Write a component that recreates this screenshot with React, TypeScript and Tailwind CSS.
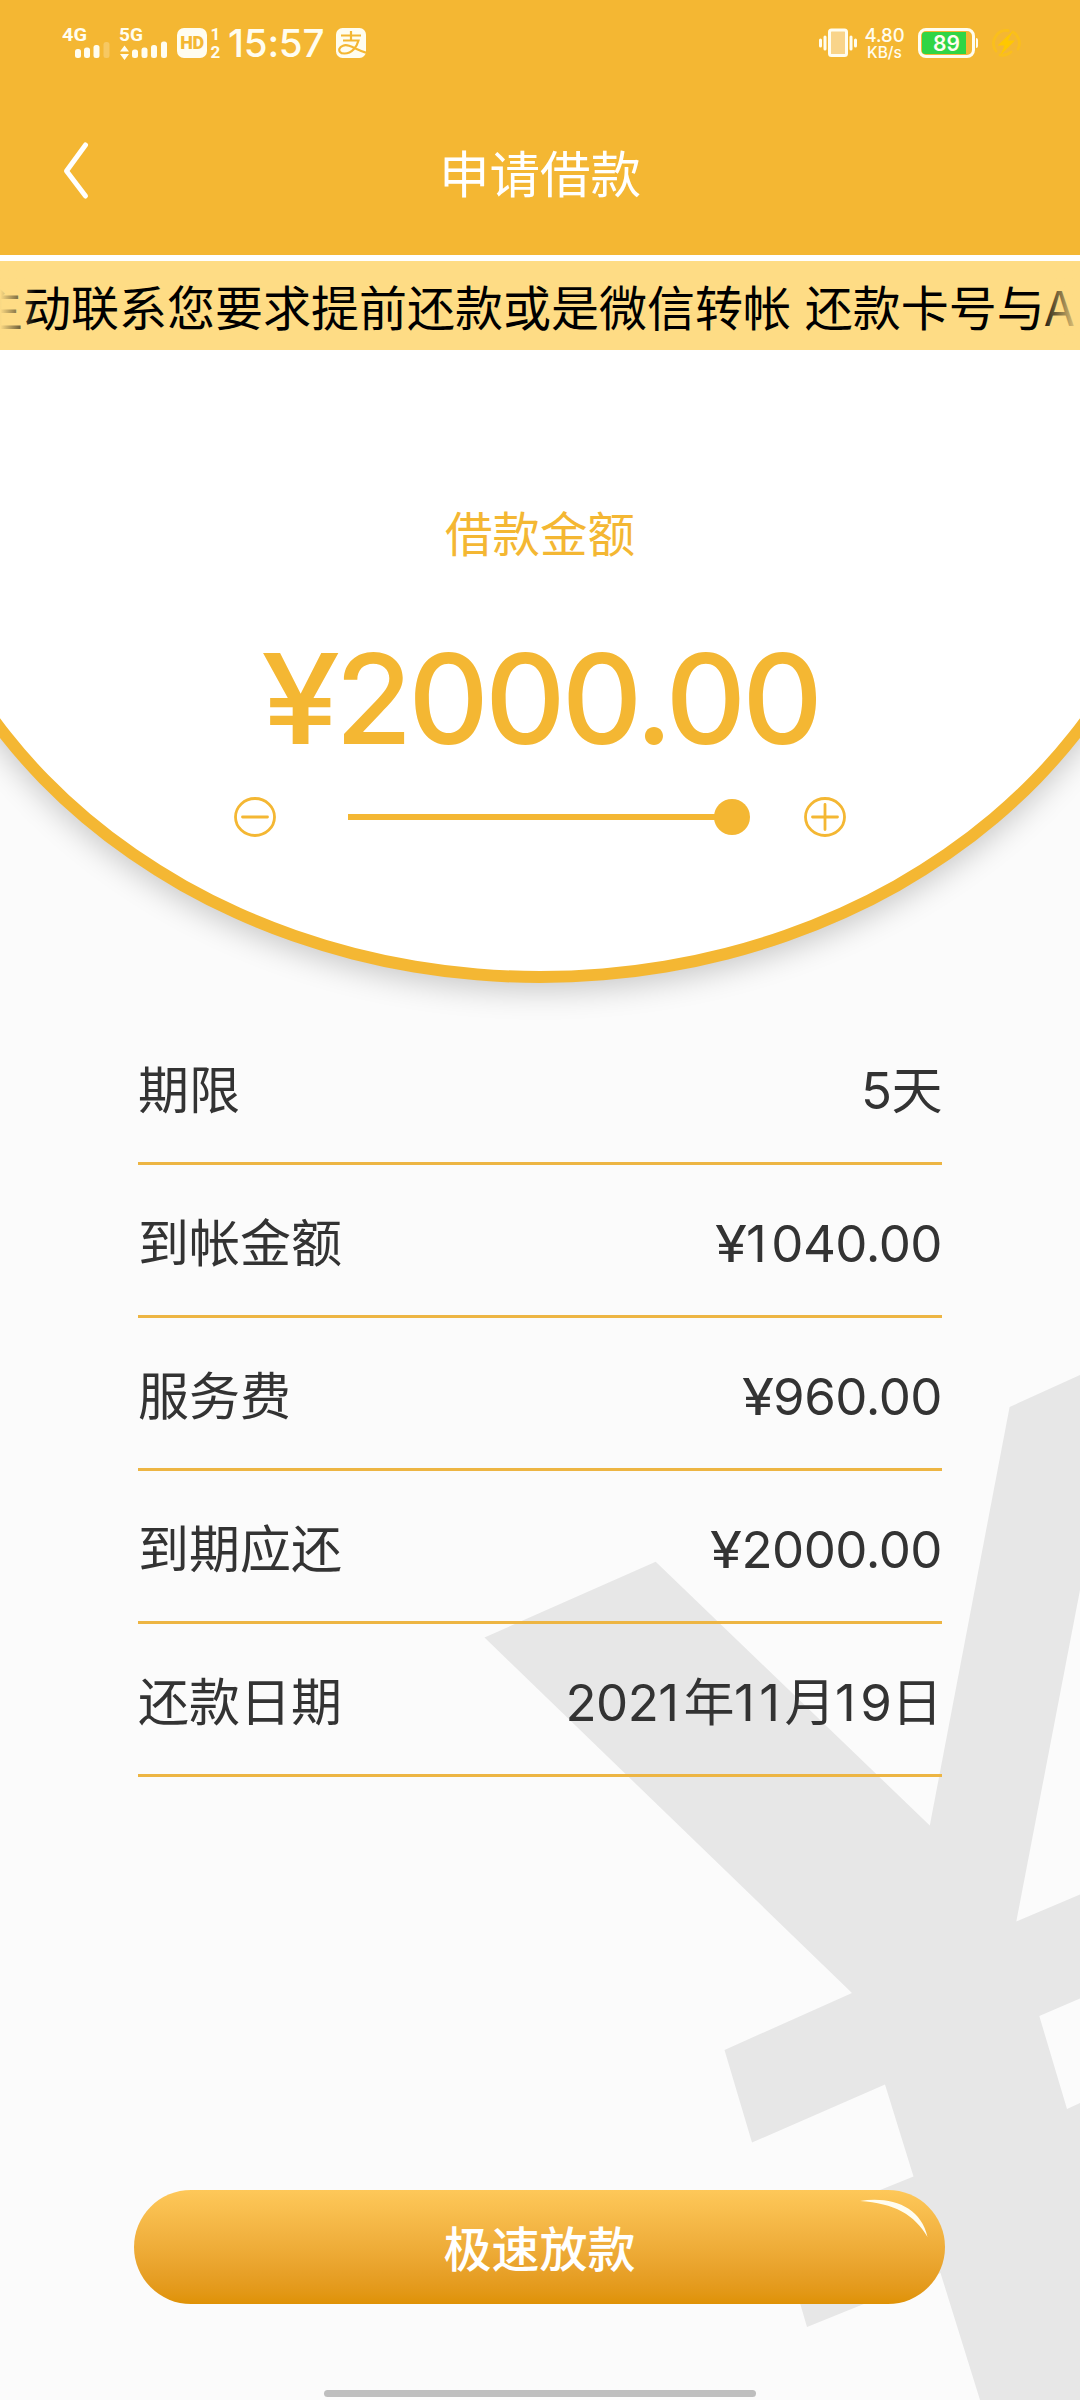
import React from 'react';

const GOLD = '#f4b733';

function Signal4G() {
  return (
    <svg className="h-[40px] w-[50px] shrink-0" viewBox="0 0 50 40" fill="#fffdf0">
      <text x="0" y="18" fontFamily="Roboto" fontWeight="700" fontSize="19" textLength="25" lengthAdjust="spacingAndGlyphs">4G</text>
      <rect x="13" y="26" width="6" height="9" rx="2.5" />
      <rect x="22" y="24.5" width="6" height="10.500" rx="2.5" />
      <rect x="31.500" y="22" width="6" height="13" rx="2.5" />
      <rect x="41.500" y="19" width="6" height="16" rx="2.5" opacity="0.25" />
    </svg>
  );
}

function Signal5G() {
  return (
    <svg className="ml-[7px] h-[40px] w-[50px] shrink-0" viewBox="0 0 50 40" fill="#fffdf0">
      <text x="0" y="18" fontFamily="Roboto" fontWeight="700" fontSize="19" textLength="24" lengthAdjust="spacingAndGlyphs">5G</text>
      <path d="M5.500 22.500l4.500 6H1z M5.500 37l4.500-6H1z" />
      <rect x="13" y="26.500" width="6" height="8.500" rx="2.5" />
      <rect x="22.500" y="24.500" width="6" height="10.500" rx="2.5" />
      <rect x="32" y="22" width="6" height="13" rx="2.5" />
      <rect x="42" y="18.500" width="6" height="16.500" rx="2.5" />
    </svg>
  );
}

function AlipayIcon() {
  return (
    <svg className="ml-[9px] h-[30px] w-[30px] shrink-0" viewBox="0 0 30 30" fill="none">
      <rect width="30" height="30" rx="6.500" fill="#fffdf0" />
      <path d="M5 7.500H25 M15 3V12.500 M7 12.500H22.500C21 18.500 16 25.500 8.500 25.500C3.500 25.500 2.800 22.500 3.500 20.700C4.500 18 8.500 16.300 13 17.800C18 19.400 23 22.500 30 24.700" stroke={GOLD} strokeWidth="2.200" />
    </svg>
  );
}

function StatusBar() {
  return (
    <div className="flex h-[86px] items-center pr-[59px] pl-[62px] font-[Roboto] text-[#fffdf0]">
      <Signal4G />
      <Signal5G />
      <div className="ml-[8px] flex h-[30px] w-[30px] items-center justify-center rounded-[7px] bg-[#fffdf0] text-[18px] leading-none font-black tracking-[-0.5px] text-[#f4b733]">HD</div>
      <div className="ml-[3px] flex w-[11px] flex-col gap-[1px] text-[17px] leading-[17px] font-bold">
        <span className="text-center">1</span>
        <span className="text-center">2</span>
      </div>
      <div className="ml-[7px] w-[99px] font-[Inter] text-[38.500px] leading-none font-medium tracking-[-0.2px]">15:57</div>
      <AlipayIcon />
      <svg className="ml-auto h-[30px] w-[38px]" viewBox="0 0 38 30" fill="none" stroke="#fffdf0" strokeWidth="3" strokeLinecap="round">
        <rect x="10.500" y="2" width="17" height="25.500" rx="2" fill="#f9d48a" />
        <path d="M6 9v12 M1.500 12v6 M32 9v12 M36.500 12v6" />
      </svg>
      <div className="ml-[8px] flex w-[39px] flex-col items-center font-[Inter]">
        <div className="text-[18.500px] leading-[18px] font-medium">4.80</div>
        <div className="text-[15.500px] leading-[17px] font-medium">KB/s</div>
      </div>
      <div className="ml-[14px] flex h-[30px] w-[57px] rounded-[8px] border-[3px] border-[#fffdf0] p-[1px]">
        <div className="flex w-[44px] items-center justify-end rounded-l-[3px] bg-[#30d545] pr-[6px] font-[Inter] text-[21px] leading-none font-semibold">89</div>
      </div>
      <div className="ml-[1px] h-[10px] w-[2px] rounded-r bg-[#fffdf0]" />
      <svg className="ml-[13px] h-[30px] w-[30px]" viewBox="0 0 30 30" fill="none">
        <path d="M17 2.500A13 13 0 0 0 5 23 M9 27A13 13 0 0 0 20 24 M22 4A13 13 0 0 1 27 21" stroke="#fabf1c" strokeWidth="2.800" strokeLinecap="round" />
        <path d="M22 3L6.500 17.500h7L9.500 27 24 12.500h-7z" fill="#ffc800" />
      </svg>
    </div>
  );
}

/* Widens the currency sign and evens out the space after the narrow "1". */
function Figures({ value }: { value: string }) {
  return (
    <>
      {value.split(/([¥1])/).map((part, i) => {
        if (part === '¥') {
          return (
            <span key={i} className="mr-[0.07em] inline-block origin-left scale-x-[1.14]">¥</span>
          );
        }
        return (
          <span key={i} className={part === '1' ? 'tracking-[4.500px]' : ''}>{part}</span>
        );
      })}
    </>
  );
}

const rows = [
  { label: '期限', value: '5天' },
  { label: '到帐金额', value: '¥1040.00' },
  { label: '服务费', value: '¥960.00' },
  { label: '到期应还', value: '¥2000.00' },
  { label: '还款日期', value: '2021年11月19日' },
];

function Watermark() {
  return (
    <svg className="absolute top-[1010px] left-[480px] h-[1040px] w-[600px]" viewBox="480 1360 600 1040">
      <path
        fill="#e7e7e7"
        d="M484.500 1637.500L655.700 1561.800L929.800 1825.500L1009.600 1407L1080 1375V1590L1016.300 1921.500L1080 1894.500V1998.500L1039.300 2016L1067 2109L1080 2103V2400H980L940.500 2273L807 2327L779 2231L913.500 2176.500L885 2084.500L752 2142.500L724.500 2050L852 1993Z"
      />
    </svg>
  );
}

export default function App() {
  return (
    <div className="flex h-[2400px] w-[1080px] flex-col overflow-hidden bg-white font-[Inter,'Noto_Sans_CJK_SC',sans-serif]">
      <header className="h-[255px] shrink-0 bg-[#f4b733]">
        <StatusBar />
        <div className="grid h-[169px] grid-cols-[1fr_auto_1fr] items-center">
          <svg className="ml-[60px] h-[60px] w-[32px]" viewBox="0 0 32 60" fill="none" stroke="#fff" strokeWidth="5" strokeLinecap="round" strokeLinejoin="round">
            <path d="M25.500 4L6.500 30L25.500 55" />
          </svg>
          <h1 className="font-['Noto_Sans_CJK_SC'] text-[50.500px] leading-[60px] text-white">申请借款</h1>
        </div>
      </header>

      <div className="relative mt-[6px] h-[89px] shrink-0 overflow-hidden bg-[#fedc85]">
        <p className="-ml-[25px] pt-[8px] font-['Noto_Sans_CJK_SC'] text-[48px] leading-[72px] [word-spacing:3px] whitespace-nowrap text-black">
          主动联系您要求提前还款或是微信转帐 还款卡号与A
        </p>
        <div className="absolute inset-y-0 left-0 w-[36px] bg-linear-to-r from-[#fedc85] to-transparent" />
        <div className="absolute inset-y-0 right-0 w-[42px] bg-linear-to-l from-[#fedc85] to-transparent" />
      </div>

      <main className="relative flex flex-1 flex-col overflow-hidden bg-[#fbfbfb]">
        <div className="absolute top-[-463px] left-[-108px] h-[1096px] w-[1296px] rounded-[50%] border-[12px] border-[#f4b733] bg-white shadow-[0_8px_30px_rgba(0,0,0,0.2)]" />
        <Watermark />

        <section className="relative flex h-[662px] shrink-0 flex-col items-center text-[#f4b733]">
          <div className="mt-[146px] font-['Noto_Sans_CJK_SC'] text-[47.500px] leading-[72px]">借款金额</div>
          <div className="mt-[66px] text-[125px] leading-[130px] font-medium tracking-[-4px]">
            <Figures value="¥2000.00" />
          </div>
          <div className="mt-[32px] flex h-[42px] w-[612px] items-center">
            <svg className="h-[42px] w-[42px]" viewBox="0 0 42 42" fill="none" stroke={GOLD} strokeWidth="2.800" strokeLinecap="round">
              <ellipse cx="21" cy="21" rx="19.500" ry="18.500" />
              <path d="M8.500 21H33.500" />
            </svg>
            <div className="ml-[72px] flex w-[402px] items-center">
              <div className="h-[6px] flex-1 bg-[#f4b733]" />
              <div className="-ml-[1px] h-[36px] w-[36px] rounded-full bg-[#f4b733]" />
            </div>
            <svg className="ml-auto h-[42px] w-[42px]" viewBox="0 0 42 42" fill="none" stroke={GOLD} strokeWidth="2.800" strokeLinecap="round">
              <ellipse cx="21" cy="21" rx="19.500" ry="18.500" />
              <path d="M8.500 21H33.500M21 8.500V33.500" />
            </svg>
          </div>
        </section>

        <section className="relative mx-[138px] flex flex-col text-[#333333]">
          {rows.map((row) => (
            <div key={row.label} className="flex h-[153px] items-center justify-between border-b-[3px] border-[#edb543] pt-[8px] text-[51px] leading-[76px]">
              <span className="pb-[9px] font-['Noto_Sans_CJK_SC']">{row.label}</span>
              <span className="tracking-[-0.5px]">
                <Figures value={row.value} />
              </span>
            </div>
          ))}
        </section>

        <button className="relative mt-auto mr-[135px] mb-[96px] ml-[134px] flex h-[114px] shrink-0 items-center justify-center rounded-full bg-linear-to-b from-[#fec859] to-[#df9204] pb-[2px] font-['Noto_Sans_CJK_SC'] text-[48px] leading-none font-medium text-white">
          极速放款
          <svg className="absolute top-[8px] right-[15px] h-[42px] w-[72px]" viewBox="0 0 72 42" fill="#fffdf0">
            <path d="M2 3C34 -2 63 9 69.500 39C57 17 36 5 2 3Z" />
          </svg>
        </button>
        <div className="relative -mt-[10px] mb-[3px] h-[7px] w-[432px] shrink-0 self-center rounded-full bg-[#bebebe]" />
      </main>
    </div>
  );
}
